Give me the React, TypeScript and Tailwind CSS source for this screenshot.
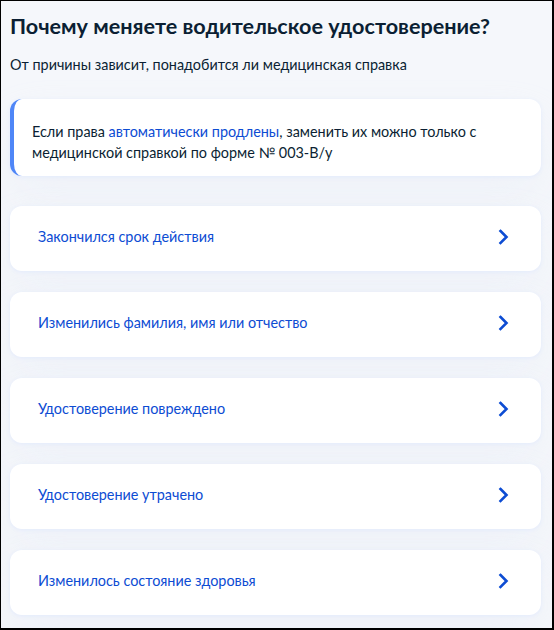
import React from "react";

const items = [
  "Закончился срок действия",
  "Изменились фамилия, имя или отчество",
  "Удостоверение повреждено",
  "Удостоверение утрачено",
  "Изменилось состояние здоровья",
];

function Chevron() {
  return (
    <svg width="24" height="24" viewBox="0 0 24 24" fill="none" className="shrink-0">
      <path d="M8.5 6 L14.5 12 L8.5 18" stroke="#0d4cd3" strokeWidth="2.6" strokeLinecap="square" strokeLinejoin="miter" />
    </svg>
  );
}

export default function App() {
  return (
    <div
      className="w-[554px] h-[630px] overflow-hidden bg-[#f5f7fb] border-l border-t border-r-2 border-b-2 border-black text-[#0b1f33]"
      style={{ fontFamily: "Lato, 'Noto Sans', sans-serif" }}
    >
      <div className="pl-[9px] pr-[11px] pt-[11px]">
        <h1 className="text-[21.6px] leading-[28px] font-bold text-[#0b1f33]">
          Почему меняете водительское удостоверение?
        </h1>
        <p className="mt-[15px] text-[14.4px] leading-[20px] text-[#0b1f33]">
          От причины зависит, понадобится ли медицинская справка
        </p>
        <div className="mt-[24px] h-[77px] box-border bg-white rounded-[12px] border-l-4 border-[#4f86f7] pl-[18px] pr-4 pt-[22px] text-[14.4px] leading-[21px] shadow-[0_1px_4px_#e3ebfc,0_24px_48px_rgba(230,235,245,0.4)]">
          Если права <span className="text-[#0d4cd3]">автоматически продлены</span>, заменить их можно только с медицинской справкой по форме № 003-В/у
        </div>
        <div className="mt-[30px] flex flex-col gap-[21px]">
          {items.map((t) => (
            <div
              key={t}
              className="h-[65px] bg-white rounded-[12px] flex items-center justify-between pl-[28px] pr-[25px] pb-[4px] shadow-[0_1px_4px_#e3ebfc,0_24px_48px_rgba(230,235,245,0.4)]"
            >
              <span className="text-[14.4px] leading-[20px] text-[#0d4cd3]">{t}</span>
              <Chevron />
            </div>
          ))}
        </div>
      </div>
    </div>
  );
}
